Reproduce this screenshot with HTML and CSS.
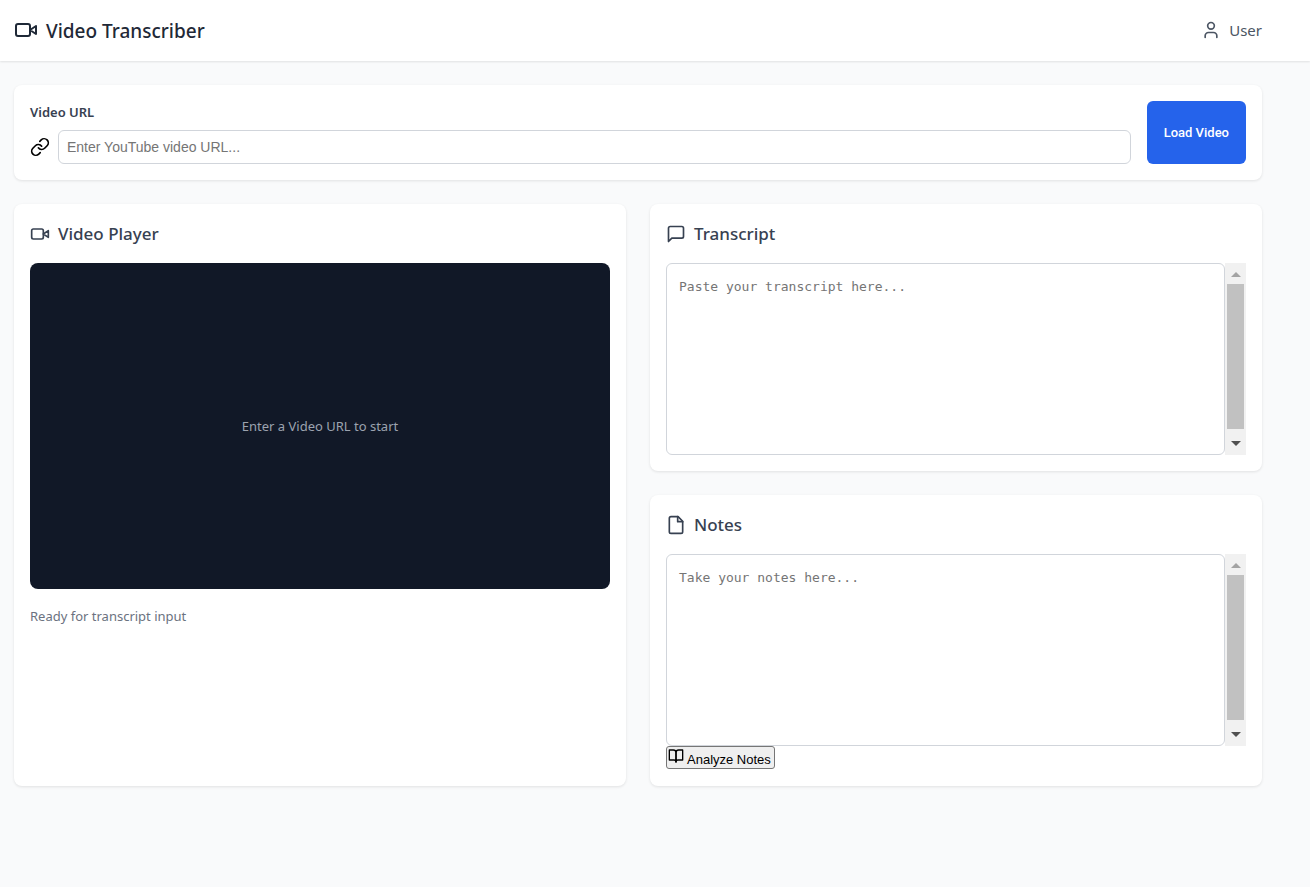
FILE: index.html
```html
<!DOCTYPE html>
<html lang="en">
<head>
    <meta charset="UTF-8">
    <meta name="viewport" content="width=device-width, initial-scale=1.0">
    <title>Video Transcriber</title>
    <link rel="stylesheet" href="styles.css">
</head>
<body>
    <header class="header">
        <div class="header-content">
            <h1 class="logo">
                <svg class="icon icon-lg" viewBox="0 0 24 24"><path d="M22 8l-6 4 6 4V8z"/><rect x="2" y="6" width="14" height="12" rx="2"/></svg>
                <span>Video Transcriber</span>
            </h1>
            <div class="user">
                <svg class="icon" viewBox="0 0 24 24"><path d="M19 21v-2a4 4 0 0 0-4-4H9a4 4 0 0 0-4 4v2"/><circle cx="12" cy="7" r="4"/></svg>
                <span>User</span>
            </div>
        </div>
    </header>

    <main class="main">
        <form class="card url-form">
            <div class="url-field">
                <label for="videoUrl">Video URL</label>
                <div class="url-row">
                    <svg class="icon" viewBox="0 0 24 24"><path d="M10 13a5 5 0 0 0 7.54.54l3-3a5 5 0 0 0-7.07-7.07l-1.72 1.71"/><path d="M14 11a5 5 0 0 0-7.54-.54l-3 3a5 5 0 0 0 7.07 7.07l1.71-1.71"/></svg>
                    <input type="text" id="videoUrl" name="videoUrl" placeholder="Enter YouTube video URL...">
                </div>
            </div>
            <button type="button" class="load-button">Load Video</button>
        </form>

        <div class="grid">
            <section class="card">
                <h2 class="card-title">
                    <svg class="icon" viewBox="0 0 24 24"><path d="M22 8l-6 4 6 4V8z"/><rect x="2" y="6" width="14" height="12" rx="2"/></svg>
                    Video Player
                </h2>
                <div class="video">Enter a Video URL to start</div>
                <p class="status">Ready for transcript input</p>
            </section>

            <div class="column">
                <section class="card">
                    <h2 class="card-title">
                        <svg class="icon" viewBox="0 0 24 24"><path d="M21 15a2 2 0 0 1-2 2H7l-4 4V5a2 2 0 0 1 2-2h14a2 2 0 0 1 2 2z"/></svg>
                        <label for="transcript">Transcript</label>
                    </h2>
                    <div class="editor">
                        <textarea id="transcript" placeholder="Paste your transcript here..."></textarea>
                        <div class="scrollbar">
                            <span class="arrow arrow-up"></span>
                            <span class="thumb"></span>
                            <span class="arrow arrow-down"></span>
                        </div>
                    </div>
                </section>

                <section class="card">
                    <h2 class="card-title">
                        <svg class="icon" viewBox="0 0 24 24"><path d="M14.5 2H6a2 2 0 0 0-2 2v16a2 2 0 0 0 2 2h12a2 2 0 0 0 2-2V7.5L14.5 2z"/><path d="M14 2v6h6"/></svg>
                        <label for="notes">Notes</label>
                    </h2>
                    <div class="editor">
                        <textarea id="notes" placeholder="Take your notes here..."></textarea>
                        <div class="scrollbar">
                            <span class="arrow arrow-up"></span>
                            <span class="thumb"></span>
                            <span class="arrow arrow-down"></span>
                        </div>
                    </div>
                    <button type="button" class="analyze-button">
                        <svg class="icon icon-sm" viewBox="0 0 24 24"><path d="M2 3h6a4 4 0 0 1 4 4v14a3 3 0 0 0-3-3H2z"/><path d="M22 3h-6a4 4 0 0 0-4 4v14a3 3 0 0 1 3-3h7z"/></svg>
                        <span>Analyze Notes</span>
                    </button>
                </section>
            </div>
        </div>
    </main>
</body>
</html>
```
FILE: styles.css
```css
* {
    box-sizing: border-box;
}

body {
    margin: 0;
    min-height: 100vh;
    font-family: "Segoe UI", "Noto Sans", sans-serif;
    background-color: #f9fafb;
    color: #000;
}

h1, h2, p {
    margin: 0;
}

.icon {
    width: 20px;
    height: 20px;
    flex-shrink: 0;
    fill: none;
    stroke: currentColor;
    stroke-width: 2;
    stroke-linecap: round;
    stroke-linejoin: round;
}

.icon-lg {
    width: 24px;
    height: 24px;
}

.icon-sm {
    width: 16px;
    height: 16px;
}

.header {
    background-color: #fff;
    box-shadow: 0 1px 2px rgba(0, 0, 0, 0.1);
}

.header-content {
    display: flex;
    justify-content: space-between;
    align-items: center;
    padding: 15px 48px 17px 14px;
}

.logo {
    display: flex;
    align-items: center;
    gap: 8px;
    font-size: 19px;
    font-weight: 500;
    line-height: 25px;
    color: #1f2937;
}

.logo span {
    padding-top: 4px;
}

.user {
    display: flex;
    align-items: center;
    gap: 8px;
    font-size: 15px;
    line-height: 24px;
    color: #4b5563;
}

.main {
    padding: 24px 48px 24px 14px;
}

.card {
    background-color: #fff;
    border-radius: 8px;
    padding: 16px;
    box-shadow: 0 1px 3px rgba(0, 0, 0, 0.1);
}

.url-form {
    display: flex;
    gap: 16px;
    margin-bottom: 24px;
}

.url-field {
    flex: 1;
}

.url-field label {
    display: block;
    margin-bottom: 6px;
    font-size: 13px;
    font-weight: 600;
    line-height: 23px;
    color: #374151;
}

.url-row {
    display: flex;
    align-items: center;
    gap: 8px;
}

.url-row input {
    flex: 1;
    height: 34px;
    padding: 8px;
    border: 1px solid #d1d5db;
    border-radius: 6px;
    font-family: "Liberation Sans", Arial, sans-serif;
    font-size: 14px;
}

.load-button {
    padding: 8px 17px;
    border: none;
    border-radius: 6px;
    background-color: #2563eb;
    color: #fff;
    font-family: Roboto, Arial, sans-serif;
    font-size: 13px;
    font-weight: 500;
    cursor: pointer;
}

.load-button:hover {
    background-color: #1d4ed8;
}

.grid {
    display: grid;
    grid-template-columns: 1fr 1fr;
    gap: 24px;
}

.column {
    display: flex;
    flex-direction: column;
    gap: 24px;
}

.card-title {
    display: flex;
    align-items: center;
    gap: 8px;
    margin-bottom: 16px;
    font-size: 17px;
    font-weight: 500;
    line-height: 27px;
    color: #374151;
}

.video {
    display: flex;
    align-items: center;
    justify-content: center;
    aspect-ratio: 16 / 9;
    border-radius: 8px;
    background-color: #111827;
    color: #9ca3af;
    font-size: 13px;
    line-height: 21px;
}

.status {
    margin-top: 16px;
    font-size: 13px;
    line-height: 23px;
    color: #6b7280;
}

.editor {
    display: flex;
    height: 192px;
}

.editor textarea {
    flex: 1;
    padding: 12px;
    border: 1px solid #d1d5db;
    border-radius: 6px;
    font-family: Consolas, "DejaVu Sans Mono", monospace;
    font-size: 13px;
    line-height: 21px;
    resize: none;
}

/* always visible scroll track next to the text box */
.scrollbar {
    display: flex;
    flex-direction: column;
    align-items: center;
    width: 21px;
    background-color: #f1f1f1;
}

.arrow {
    display: flex;
    align-items: center;
    justify-content: center;
    height: 21px;
    padding-top: 2px;
}

.arrow::before {
    content: "";
    border: 5px solid transparent;
}

.arrow-up::before {
    border-top: none;
    border-bottom-color: #a3a3a3;
}

.arrow-down {
    height: 26px;
}

.arrow-down::before {
    border-bottom: none;
    border-top-color: #505050;
}

.thumb {
    flex: 1;
    width: 17px;
    background-color: #c1c1c1;
}

.analyze-button {
    display: flex;
    align-items: center;
    gap: 3px;
    height: 23px;
    margin-bottom: 1px;
    padding: 0 3px 0 1px;
    border: 1px solid #767676;
    border-radius: 3px;
    background-color: #efefef;
    color: #000;
    font-family: "Liberation Sans", Arial, sans-serif;
    font-size: 13px;
}

.analyze-button .icon {
    align-self: flex-start;
    margin-top: 1px;
}

.analyze-button span {
    padding-top: 3px;
}
```
